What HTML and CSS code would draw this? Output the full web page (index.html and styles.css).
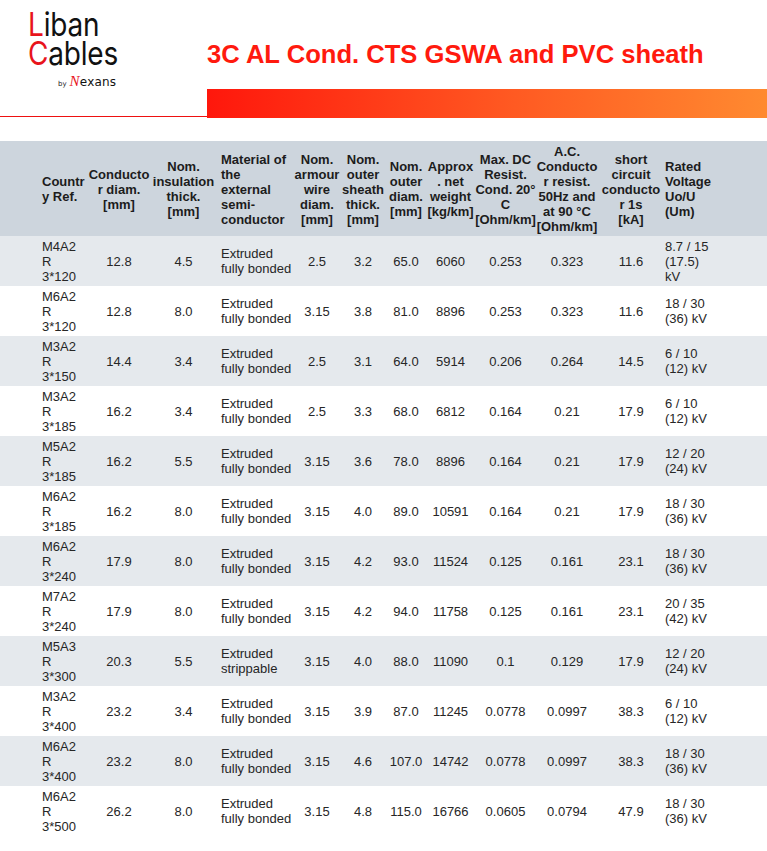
FILE: index.html
```html
<!DOCTYPE html>
<html lang="en">
<head>
<meta charset="utf-8">
<title>3C AL Cond. CTS GSWA and PVC sheath</title>
<link rel="stylesheet" href="styles.css">
</head>
<body>
<header class="top">
  <div class="brand">
    <div class="logo-line"><span class="red">L</span>iban</div>
    <div class="logo-line"><span class="red">C</span>ables</div>
    <div class="byline"><span class="by">by</span><span class="nx"><span class="nx-n">N</span>exans</span></div>
  </div>
  <div class="head-right">
    <h1 class="title">3C AL Cond. CTS GSWA and PVC sheath</h1>
    <div class="bar"></div>
  </div>
</header>

<table class="cables">
  <colgroup>
    <col class="c1"><col class="c2"><col class="c3"><col class="c4"><col class="c5"><col class="c6">
    <col class="c7"><col class="c8"><col class="c9"><col class="c10"><col class="c11"><col class="c12">
  </colgroup>
  <thead>
    <tr>
      <th class="l first">Countr<br>y Ref.</th>
      <th>Conducto<br>r diam.<br>[mm]</th>
      <th>Nom.<br>insulation<br>thick.<br>[mm]</th>
      <th class="l mat">Material of<br>the<br>external<br>semi-<br>conductor</th>
      <th>Nom.<br>armour<br>wire<br>diam.<br>[mm]</th>
      <th>Nom.<br>outer<br>sheath<br>thick.<br>[mm]</th>
      <th>Nom.<br>outer<br>diam.<br>[mm]</th>
      <th>Approx<br>. net<br>weight<br>[kg/km]</th>
      <th>Max. DC<br>Resist.<br>Cond. 20°<br>C<br>[Ohm/km]</th>
      <th>A.C.<br>Conducto<br>r resist.<br>50Hz and<br>at 90 °C<br>[Ohm/km]</th>
      <th>short<br>circuit<br>conducto<br>r 1s<br>[kA]</th>
      <th class="l last">Rated<br>Voltage<br>Uo/U<br>(Um)</th>
    </tr>
  </thead>
  <tbody>
    <tr><td class="l first">M4A2<br>R<br>3*120</td><td>12.8</td><td>4.5</td><td class="l mat">Extruded<br>fully bonded</td><td>2.5</td><td>3.2</td><td>65.0</td><td>6060</td><td>0.253</td><td>0.323</td><td>11.6</td><td class="l last">8.7 / 15<br>(17.5)<br>kV</td></tr>
    <tr><td class="l first">M6A2<br>R<br>3*120</td><td>12.8</td><td>8.0</td><td class="l mat">Extruded<br>fully bonded</td><td>3.15</td><td>3.8</td><td>81.0</td><td>8896</td><td>0.253</td><td>0.323</td><td>11.6</td><td class="l last">18 / 30<br>(36) kV</td></tr>
    <tr><td class="l first">M3A2<br>R<br>3*150</td><td>14.4</td><td>3.4</td><td class="l mat">Extruded<br>fully bonded</td><td>2.5</td><td>3.1</td><td>64.0</td><td>5914</td><td>0.206</td><td>0.264</td><td>14.5</td><td class="l last">6 / 10<br>(12) kV</td></tr>
    <tr><td class="l first">M3A2<br>R<br>3*185</td><td>16.2</td><td>3.4</td><td class="l mat">Extruded<br>fully bonded</td><td>2.5</td><td>3.3</td><td>68.0</td><td>6812</td><td>0.164</td><td>0.21</td><td>17.9</td><td class="l last">6 / 10<br>(12) kV</td></tr>
    <tr><td class="l first">M5A2<br>R<br>3*185</td><td>16.2</td><td>5.5</td><td class="l mat">Extruded<br>fully bonded</td><td>3.15</td><td>3.6</td><td>78.0</td><td>8896</td><td>0.164</td><td>0.21</td><td>17.9</td><td class="l last">12 / 20<br>(24) kV</td></tr>
    <tr><td class="l first">M6A2<br>R<br>3*185</td><td>16.2</td><td>8.0</td><td class="l mat">Extruded<br>fully bonded</td><td>3.15</td><td>4.0</td><td>89.0</td><td>10591</td><td>0.164</td><td>0.21</td><td>17.9</td><td class="l last">18 / 30<br>(36) kV</td></tr>
    <tr><td class="l first">M6A2<br>R<br>3*240</td><td>17.9</td><td>8.0</td><td class="l mat">Extruded<br>fully bonded</td><td>3.15</td><td>4.2</td><td>93.0</td><td>11524</td><td>0.125</td><td>0.161</td><td>23.1</td><td class="l last">18 / 30<br>(36) kV</td></tr>
    <tr><td class="l first">M7A2<br>R<br>3*240</td><td>17.9</td><td>8.0</td><td class="l mat">Extruded<br>fully bonded</td><td>3.15</td><td>4.2</td><td>94.0</td><td>11758</td><td>0.125</td><td>0.161</td><td>23.1</td><td class="l last">20 / 35<br>(42) kV</td></tr>
    <tr><td class="l first">M5A3<br>R<br>3*300</td><td>20.3</td><td>5.5</td><td class="l mat">Extruded<br>strippable</td><td>3.15</td><td>4.0</td><td>88.0</td><td>11090</td><td>0.1</td><td>0.129</td><td>17.9</td><td class="l last">12 / 20<br>(24) kV</td></tr>
    <tr><td class="l first">M3A2<br>R<br>3*400</td><td>23.2</td><td>3.4</td><td class="l mat">Extruded<br>fully bonded</td><td>3.15</td><td>3.9</td><td>87.0</td><td>11245</td><td>0.0778</td><td>0.0997</td><td>38.3</td><td class="l last">6 / 10<br>(12) kV</td></tr>
    <tr><td class="l first">M6A2<br>R<br>3*400</td><td>23.2</td><td>8.0</td><td class="l mat">Extruded<br>fully bonded</td><td>3.15</td><td>4.6</td><td>107.0</td><td>14742</td><td>0.0778</td><td>0.0997</td><td>38.3</td><td class="l last">18 / 30<br>(36) kV</td></tr>
    <tr><td class="l first">M6A2<br>R<br>3*500</td><td>26.2</td><td>8.0</td><td class="l mat">Extruded<br>fully bonded</td><td>3.15</td><td>4.8</td><td>115.0</td><td>16766</td><td>0.0605</td><td>0.0794</td><td>47.9</td><td class="l last">18 / 30<br>(36) kV</td></tr>
  </tbody>
</table>
</body>
</html>
```
FILE: styles.css
```css
html, body {
  margin: 0;
  padding: 0;
  background: #ffffff;
}
body {
  font-family: "Liberation Sans", Arial, sans-serif;
  color: #222222;
  width: 767px;
}

/* ---------- header ---------- */
.top {
  display: flex;
  height: 118px;
}
.brand {
  width: 207px;
  height: 117px;
  box-sizing: border-box;
  border-bottom: 1px solid #ee1111;
  padding: 8px 0 0 28px;
}
.logo-line {
  font-family: Inter, "DejaVu Sans", sans-serif;
  font-weight: 400;
  font-size: 28px;
  line-height: 28.5px;
  letter-spacing: -0.2px;
  color: #111111;
  transform: scaleY(1.18);
  transform-origin: 0 0;
}
.red {
  color: #e8141c;
}
.byline {
  display: flex;
  align-items: baseline;
  margin: 8px 0 0 30px;
}
.by {
  font-family: "DejaVu Sans", sans-serif;
  font-size: 7px;
  color: #222;
  margin-right: 3px;
}
.nx {
  font-family: "DejaVu Sans", sans-serif;
  font-size: 12px;
  color: #111;
  letter-spacing: 0.2px;
}
.nx-n {
  color: #e8141c;
  font-style: italic;
  font-size: 15px;
  font-family: "Liberation Serif", serif;
}
.head-right {
  flex: 1;
  display: flex;
  flex-direction: column;
}
.title {
  margin: 39px 0 0 0;
  font-family: "Liberation Sans", Arial, sans-serif;
  font-weight: bold;
  font-size: 25.6px;
  line-height: 30px;
  color: #ff1a0e;
}
.bar {
  margin-top: auto;
  height: 29px;
  background: linear-gradient(90deg, #ff170c 0%, #ff5a22 55%, #ff8a30 100%);
}

/* ---------- table ---------- */
.cables {
  margin-top: 23px;
  width: 767px;
  border-collapse: collapse;
  table-layout: fixed;
  font-size: 13px;
  line-height: 15px;
}
.c1 { width: 87px; }
.c2 { width: 64px; }
.c3 { width: 65px; }
.c4 { width: 78px; }
.c5 { width: 46px; }
.c6 { width: 46px; }
.c7 { width: 40px; }
.c8 { width: 49px; }
.c9 { width: 61px; }
.c10 { width: 62px; }
.c11 { width: 66px; }
.c12 { width: 103px; }

.cables th,
.cables td {
  padding: 0;
  text-align: center;
  vertical-align: middle;
  white-space: nowrap;
}
.cables thead tr {
  background: #cdd5dd;
}
.cables th {
  font-weight: bold;
  color: #1c1c1c;
  height: 90px;
  padding: 3px 0 2px 0;
}
.cables td {
  height: 45px;
  padding: 2.5px 0;
  color: #262626;
}
.cables tbody tr:nth-child(odd) {
  background: #e5e9ed;
}
.cables tbody tr:nth-child(even) {
  background: #ffffff;
}
.cables .l {
  text-align: left;
}
.cables .first {
  padding-left: 42px;
}
.cables .mat {
  padding-left: 5px;
}
.cables .last {
  padding-left: 1px;
}
```
